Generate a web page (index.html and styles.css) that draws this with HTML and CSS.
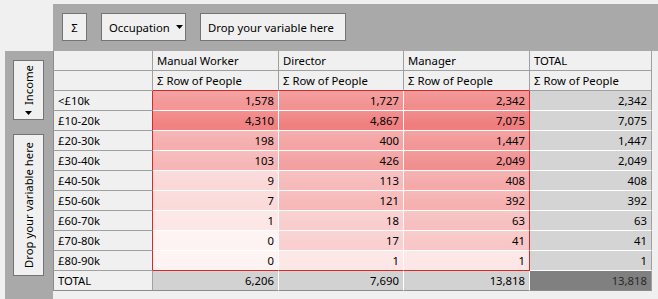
FILE: index.html
```html
<!DOCTYPE html>
<html lang="en">
<head>
    <meta charset="UTF-8">
    <title>Pivot Grid</title>
    <link rel="stylesheet" href="styles.css">
</head>
<body>

    <div class="pivot">
        <div class="corner"></div>

        <!-- Column fields zone -->
        <div class="col-zone">
            <div class="chip chip-sigma">Σ</div>
            <div class="chip chip-field">
                <span>Occupation</span>
                <svg class="caret" width="7" height="4" viewBox="0 0 7 4"><path d="M0 0H7L3.5 4Z" fill="#000"/></svg>
            </div>
            <div class="chip chip-drop">Drop your variable here</div>
        </div>

        <!-- Row fields zone -->
        <div class="row-zone">
            <div class="vchip vchip-field">
                <span class="vlabel">Income</span>
                <svg class="caret" width="7" height="4" viewBox="0 0 7 4"><path d="M0 0H7L3.5 4Z" fill="#000"/></svg>
            </div>
            <div class="vchip vchip-drop">
                <span class="vlabel">Drop your variable here</span>
            </div>
        </div>

        <!-- Data grid -->
        <div class="grid-area">
            <table class="pivot-table">
                <colgroup>
                    <col style="width:100px">
                    <col style="width:126px">
                    <col style="width:125px">
                    <col style="width:126px">
                    <col style="width:122px">
                </colgroup>
                <tr class="head">
                    <td></td>
                    <td>Manual Worker</td>
                    <td>Director</td>
                    <td>Manager</td>
                    <td>TOTAL</td>
                </tr>
                <tr class="head head-measure">
                    <td></td>
                    <td class="over">Σ Row of People</td>
                    <td class="over">Σ Row of People</td>
                    <td class="over">Σ Row of People</td>
                    <td>Σ Row of People</td>
                </tr>
                <tr>
                    <td class="label">&lt;£10k</td>
                    <td class="num heat" style="background-color:#f39797">1,578</td>
                    <td class="num heat" style="background-color:#f29393">1,727</td>
                    <td class="num heat last" style="background-color:#f18d8d">2,342</td>
                    <td class="num total-col">2,342</td>
                </tr>
                <tr>
                    <td class="label">£10-20k</td>
                    <td class="num heat" style="background-color:#f18282">4,310</td>
                    <td class="num heat" style="background-color:#f08080">4,867</td>
                    <td class="num heat last" style="background-color:#ef7e7e">7,075</td>
                    <td class="num total-col">7,075</td>
                </tr>
                <tr>
                    <td class="label">£20-30k</td>
                    <td class="num heat" style="background-color:#f5aeae">198</td>
                    <td class="num heat" style="background-color:#f4a4a4">400</td>
                    <td class="num heat last" style="background-color:#f29797">1,447</td>
                    <td class="num total-col">1,447</td>
                </tr>
                <tr>
                    <td class="label">£30-40k</td>
                    <td class="num heat" style="background-color:#f6b6b6">103</td>
                    <td class="num heat" style="background-color:#f3a0a0">426</td>
                    <td class="num heat last" style="background-color:#f18f8f">2,049</td>
                    <td class="num total-col">2,049</td>
                </tr>
                <tr>
                    <td class="label">£40-50k</td>
                    <td class="num heat" style="background-color:#fad8d8">9</td>
                    <td class="num heat" style="background-color:#f7baba">113</td>
                    <td class="num heat last" style="background-color:#f5a9a9">408</td>
                    <td class="num total-col">408</td>
                </tr>
                <tr>
                    <td class="label">£50-60k</td>
                    <td class="num heat" style="background-color:#fbdada">7</td>
                    <td class="num heat" style="background-color:#f7b8b8">121</td>
                    <td class="num heat last" style="background-color:#f6b0b0">392</td>
                    <td class="num total-col">392</td>
                </tr>
                <tr>
                    <td class="label">£60-70k</td>
                    <td class="num heat" style="background-color:#fde6e6">1</td>
                    <td class="num heat" style="background-color:#f9cdcd">18</td>
                    <td class="num heat last" style="background-color:#f7bfbf">63</td>
                    <td class="num total-col">63</td>
                </tr>
                <tr>
                    <td class="label">£70-80k</td>
                    <td class="num heat" style="background-color:#fef3f3">0</td>
                    <td class="num heat" style="background-color:#f9cfcf">17</td>
                    <td class="num heat last" style="background-color:#f8c6c6">41</td>
                    <td class="num total-col">41</td>
                </tr>
                <tr class="last-row">
                    <td class="label">£80-90k</td>
                    <td class="num heat" style="background-color:#fef3f3">0</td>
                    <td class="num heat" style="background-color:#fde6e6">1</td>
                    <td class="num heat last" style="background-color:#fde6e6">1</td>
                    <td class="num total-col">1</td>
                </tr>
                <tr class="total-row">
                    <td class="label">TOTAL</td>
                    <td class="num">6,206</td>
                    <td class="num">7,690</td>
                    <td class="num">13,818</td>
                    <td class="num grand">13,818</td>
                </tr>
            </table>
        </div>
    </div>

</body>
</html>
```

FILE: styles.css
```css
body {
    margin: 0;
    background-color: #f0f0f0;
    font-family: "Noto Sans", "Open Sans", sans-serif;
    font-size: 11.3px;
    color: #000;
}

.pivot {
    display: grid;
    grid-template-columns: 48px 605px;
    grid-template-rows: 47px 248px;
    padding: 4px 0 0 5px;
}

/* Field zones */
.col-zone {
    background-color: #a9a9a9;
    display: flex;
    align-items: flex-start;
    gap: 14px;
    padding: 9px 0 0 9px;
}

.row-zone {
    background-color: #a9a9a9;
    display: flex;
    flex-direction: column;
    gap: 14px;
    padding: 9px 0 0 8px;
}

.chip, .vchip {
    box-sizing: border-box;
    background-color: #f0f0f0;
    border: 1px solid #747474;
    display: flex;
    align-items: center;
    white-space: nowrap;
}

.chip {
    height: 28px;
    padding: 0 7px;
}

.chip-sigma {
    width: 25px;
    justify-content: center;
    padding: 0;
}

.chip-field {
    width: 85px;
    justify-content: space-between;
    padding-right: 2px;
}

.chip-drop {
    width: 146px;
}

.vchip {
    width: 31px;
    flex-direction: column;
    justify-content: center;
    gap: 6px;
}

.vchip-field {
    height: 60px;
}

.vchip-drop {
    height: 142px;
}

.vlabel {
    writing-mode: vertical-rl;
    transform: rotate(180deg);
    line-height: 16px;
}

.caret {
    display: block;
}

/* Grid */
.grid-area {
    background-color: #f0f0f0;
}

.pivot-table {
    border-collapse: separate;
    border-spacing: 0;
    table-layout: fixed;
    width: 599px;
}

.pivot-table td {
    height: 19px;
    line-height: 19px;
    padding: 0 4px;
    background-color: #f0f0f0;
    border-right: 1px solid #a0a0a0;
    border-bottom: 1px solid #a0a0a0;
    white-space: nowrap;
    overflow: hidden;
}

.pivot-table td:first-child {
    border-left: 1px solid #8c8c8c;
}

.num {
    text-align: right;
}

.head-measure .over {
    border-bottom-color: #d42a2a;
}

.pivot-table td.label {
    border-right-color: #a0a0a0;
}

.pivot-table tr:nth-child(n+3):not(.total-row) td.label {
    border-right-color: #d42a2a;
}

.pivot-table td.heat {
    border-right-color: #fff;
    border-bottom-color: #fff;
    background-image: linear-gradient(to bottom, rgba(255, 255, 255, 0.12), rgba(255, 255, 255, 0) 70%);
}

.pivot-table td.heat.last {
    border-right-color: #d42a2a;
}

.pivot-table .last-row td.heat {
    border-bottom-color: #d42a2a;
}

.pivot-table td.total-col {
    background-color: #d4d4d4;
    border-bottom-color: #fff;
}

.total-row td {
    background-color: #d2d2d2;
}

.pivot-table .total-row td {
    border-right-color: #fff;
    border-bottom-color: #8c8c8c;
}

.pivot-table .total-row td.label {
    background-color: #f0f0f0;
    border-right-color: #a0a0a0;
}

.pivot-table .total-row td.grand {
    background-color: #808080;
    color: #2a2a2a;
    border-right-color: #a0a0a0;
}
```
